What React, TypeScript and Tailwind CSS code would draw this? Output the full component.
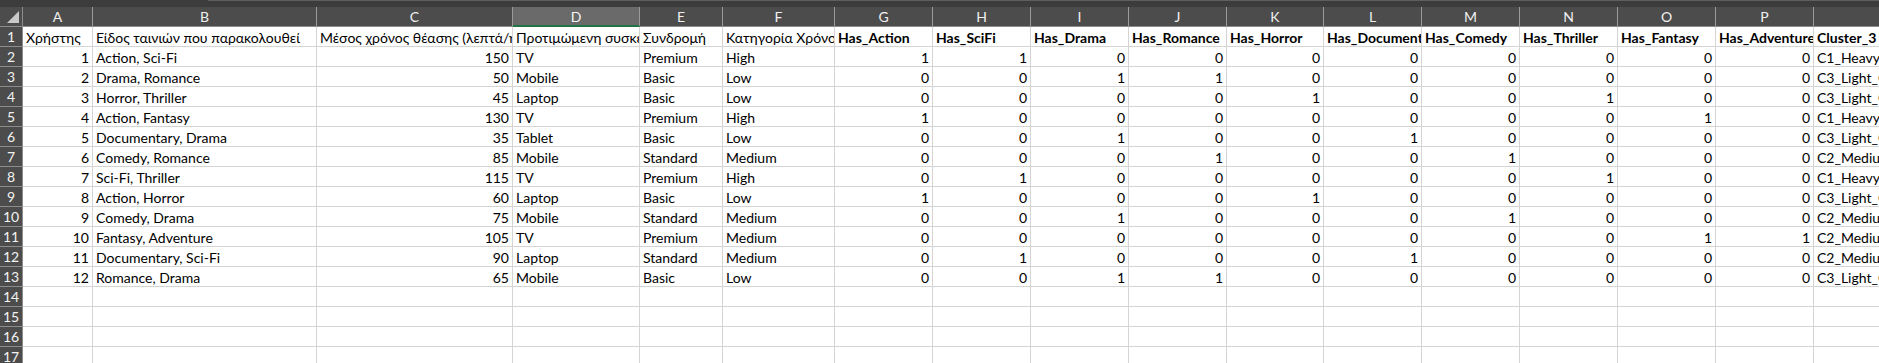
import React from 'react';

type Row = {
  id: number;
  genres: string;
  minutes: number;
  device: string;
  plan: string;
  category: string;
  flags: number[];
  cluster: string;
};

const rows: Row[] = [
  { id: 1, genres: 'Action, Sci-Fi', minutes: 150, device: 'TV', plan: 'Premium', category: 'High', flags: [1, 1, 0, 0, 0, 0, 0, 0, 0, 0], cluster: 'C1_Heavy_Users' },
  { id: 2, genres: 'Drama, Romance', minutes: 50, device: 'Mobile', plan: 'Basic', category: 'Low', flags: [0, 0, 1, 1, 0, 0, 0, 0, 0, 0], cluster: 'C3_Light_Casual' },
  { id: 3, genres: 'Horror, Thriller', minutes: 45, device: 'Laptop', plan: 'Basic', category: 'Low', flags: [0, 0, 0, 0, 1, 0, 0, 1, 0, 0], cluster: 'C3_Light_Casual' },
  { id: 4, genres: 'Action, Fantasy', minutes: 130, device: 'TV', plan: 'Premium', category: 'High', flags: [1, 0, 0, 0, 0, 0, 0, 0, 1, 0], cluster: 'C1_Heavy_Users' },
  { id: 5, genres: 'Documentary, Drama', minutes: 35, device: 'Tablet', plan: 'Basic', category: 'Low', flags: [0, 0, 1, 0, 0, 1, 0, 0, 0, 0], cluster: 'C3_Light_Casual' },
  { id: 6, genres: 'Comedy, Romance', minutes: 85, device: 'Mobile', plan: 'Standard', category: 'Medium', flags: [0, 0, 0, 1, 0, 0, 1, 0, 0, 0], cluster: 'C2_Medium_Users' },
  { id: 7, genres: 'Sci-Fi, Thriller', minutes: 115, device: 'TV', plan: 'Premium', category: 'High', flags: [0, 1, 0, 0, 0, 0, 0, 1, 0, 0], cluster: 'C1_Heavy_Users' },
  { id: 8, genres: 'Action, Horror', minutes: 60, device: 'Laptop', plan: 'Basic', category: 'Low', flags: [1, 0, 0, 0, 1, 0, 0, 0, 0, 0], cluster: 'C3_Light_Casual' },
  { id: 9, genres: 'Comedy, Drama', minutes: 75, device: 'Mobile', plan: 'Standard', category: 'Medium', flags: [0, 0, 1, 0, 0, 0, 1, 0, 0, 0], cluster: 'C2_Medium_Users' },
  { id: 10, genres: 'Fantasy, Adventure', minutes: 105, device: 'TV', plan: 'Premium', category: 'Medium', flags: [0, 0, 0, 0, 0, 0, 0, 0, 1, 1], cluster: 'C2_Medium_Users' },
  { id: 11, genres: 'Documentary, Sci-Fi', minutes: 90, device: 'Laptop', plan: 'Standard', category: 'Medium', flags: [0, 1, 0, 0, 0, 1, 0, 0, 0, 0], cluster: 'C2_Medium_Users' },
  { id: 12, genres: 'Romance, Drama', minutes: 65, device: 'Mobile', plan: 'Basic', category: 'Low', flags: [0, 0, 1, 1, 0, 0, 0, 0, 0, 0], cluster: 'C3_Light_Casual' },
];

const letters = ['A', 'B', 'C', 'D', 'E', 'F', 'G', 'H', 'I', 'J', 'K', 'L', 'M', 'N', 'O', 'P', ''];

const headers = [
  'Χρήστης',
  'Είδος ταινιών που παρακολουθεί',
  'Μέσος χρόνος θέασης (λεπτά/ημέρα)',
  'Προτιμώμενη συσκευή',
  'Συνδρομή',
  'Κατηγορία Χρόνου',
  'Has_Action',
  'Has_SciFi',
  'Has_Drama',
  'Has_Romance',
  'Has_Horror',
  'Has_Documentary',
  'Has_Comedy',
  'Has_Thriller',
  'Has_Fantasy',
  'Has_Adventure',
  'Cluster_3',
];

const gridCols =
  'grid grid-cols-[23px_70px_224px_196px_127px_83px_112px_98px_98px_98px_98px_97px_98px_98px_98px_98px_98px_200px]';

const cell = 'h-5 border-r border-b border-[#d4d4d4] overflow-hidden whitespace-nowrap leading-[21px] px-[3px] text-black';
const rowHead = 'h-5 bg-[#4c4c4c] border-b border-r border-[#8c8c8c] text-[#f2f2f2] text-[14px] leading-[20px] text-center';

function SelectAllCorner() {
  return (
    <div className="relative h-5 bg-[#4c4c4c] border-r border-b border-[#8c8c8c]">
      <svg width="22" height="19" className="absolute left-0 top-0">
        <polygon points="7,16 19,16 19,4" fill="#c9c9c9" />
      </svg>
    </div>
  );
}

export default function App() {
  const blanks = [14, 15, 16, 17];

  return (
    <div className="w-[1879px] h-[363px] overflow-hidden bg-white font-['Lato','Noto_Sans',sans-serif] text-[14px]">
      <div className="h-[7px] bg-[#3c3c3c] flex">
        <div className="w-[208px]" />
        <div className="flex-1 h-px bg-[#5e5e5e]" />
      </div>
      <div className={gridCols}>
        <SelectAllCorner />
        {letters.map((l, i) => (
          <div
            key={'col' + i}
            className={
              l === 'D'
                ? 'h-5 bg-[#6a6a6a] border-r border-[#9a9a9a] border-b-2 border-b-[#217346] text-[#f5f5f5] text-[14px] leading-[19px] text-center'
                : 'h-5 bg-[#4c4c4c] border-r border-[#9a9a9a] border-b border-b-[#8c8c8c] text-[#f0f0f0] text-[14px] leading-[20px] text-center'
            }
          >
            {l}
          </div>
        ))}

        <div className={rowHead}>1</div>
        {headers.map((h, i) => (
          <div key={'h' + i} className={cell + (i >= 6 ? ' font-bold' : '')}>
            {h}
          </div>
        ))}

        {rows.map((r, ri) => (
          <React.Fragment key={r.id}>
            <div className={rowHead}>{ri + 2}</div>
            <div className={cell + ' text-right'}>{r.id}</div>
            <div className={cell}>{r.genres}</div>
            <div className={cell + ' text-right'}>{r.minutes}</div>
            <div className={cell}>{r.device}</div>
            <div className={cell}>{r.plan}</div>
            <div className={cell}>{r.category}</div>
            {r.flags.map((f, fi) => (
              <div key={fi} className={cell + ' text-right'}>
                {f}
              </div>
            ))}
            <div className={cell}>{r.cluster}</div>
          </React.Fragment>
        ))}

        {blanks.map((n) => (
          <React.Fragment key={'b' + n}>
            <div className={rowHead}>{n}</div>
            {letters.map((_, ci) => (
              <div key={ci} className={cell} />
            ))}
          </React.Fragment>
        ))}
      </div>
    </div>
  );
}
